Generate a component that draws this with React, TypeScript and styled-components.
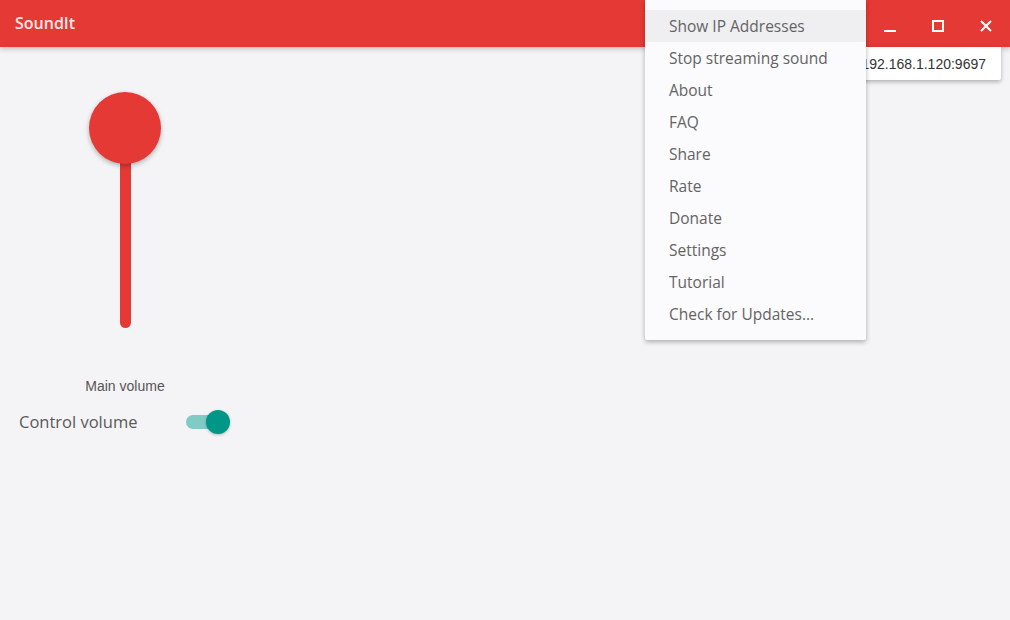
import React from "react";
import styled, { createGlobalStyle } from "styled-components";

const Global = createGlobalStyle`
  html, body { margin: 0; padding: 0; }
  body {
    background: #f4f3f6;
    font-family: "Open Sans", "Noto Sans", sans-serif;
    width: 1010px;
    height: 620px;
    overflow: hidden;
  }
`;

const Window = styled.div`
  position: relative;
  width: 1010px;
  height: 620px;
  background: #f4f3f6;
  display: flex;
  flex-direction: column;
`;

const TitleBar = styled.header`
  height: 47px;
  flex: none;
  background: #e53935;
  display: flex;
  align-items: center;
  box-shadow: 0 2px 5px rgba(0, 0, 0, 0.22);
  position: relative;
  z-index: 1;
`;

const Title = styled.div`
  padding-left: 15px;
  color: #fbe9e9;
  font-family: "Open Sans", sans-serif;
  font-weight: 600;
  font-size: 16px;
  flex: 1;
  margin-top: -1px;
`;

const Controls = styled.div`
  display: flex;
  height: 100%;
`;

const CtrlButton = styled.div`
  width: 48px;
  height: 100%;
  display: flex;
  align-items: center;
  justify-content: center;
  padding-top: 4px;
  box-sizing: border-box;
`;

const Content = styled.main`
  flex: 1;
  display: flex;
  flex-direction: column;
  padding-top: 45px;
`;

const SliderColumn = styled.div`
  width: 250px;
  display: flex;
  flex-direction: column;
  align-items: center;
`;

const Knob = styled.div`
  width: 72px;
  height: 72px;
  border-radius: 50%;
  background: #e53935;
  box-shadow: 0 2px 5px rgba(0, 0, 0, 0.28);
  position: relative;
  z-index: 1;
`;

const Track = styled.div`
  width: 11px;
  height: 170px;
  margin-top: -6px;
  background: #e53935;
  border-radius: 0 0 6px 6px;
`;

const SliderLabel = styled.div`
  margin-top: 50px;
  font-family: "Liberation Sans", Arial, sans-serif;
  font-size: 14px;
  line-height: 16px;
  color: #555;
`;

const ToggleRow = styled.div`
  margin-top: 16px;
  padding-left: 19px;
  display: flex;
  align-items: center;
  gap: 48px;
`;

const ToggleLabel = styled.div`
  font-family: "Open Sans", sans-serif;
  font-size: 16.5px;
  color: #5a5a5a;
  width: 119px;
  white-space: nowrap;
`;

const Switch = styled.div<{ $on: boolean }>`
  position: relative;
  width: 34px;
  height: 14px;
  border-radius: 7px;
  background: ${(p) => (p.$on ? "#80cbc4" : "#bdbdbd")};
`;

const Thumb = styled.div<{ $on: boolean }>`
  position: absolute;
  top: -5px;
  left: ${(p) => (p.$on ? "20px" : "-4px")};
  width: 24px;
  height: 24px;
  border-radius: 50%;
  background: ${(p) => (p.$on ? "#009688" : "#fafafa")};
  box-shadow: 0 1px 3px rgba(0, 0, 0, 0.25);
`;

const IpPopup = styled.div`
  position: absolute;
  top: 47px;
  left: 839px;
  width: 162px;
  height: 33px;
  box-sizing: border-box;
  background: #ffffff;
  box-shadow: 0 2px 4px rgba(0, 0, 0, 0.28);
  border-radius: 0 0 2px 2px;
  display: flex;
  align-items: center;
  justify-content: flex-end;
  padding-right: 15px;
  font-family: "Liberation Sans", Arial, sans-serif;
  font-size: 14px;
  color: #333;
  z-index: 2;
`;

const Menu = styled.ul`
  position: absolute;
  top: 0;
  left: 645px;
  width: 221px;
  margin: 0;
  padding: 10px 0;
  list-style: none;
  background: #fbfafc;
  box-shadow: 0 2px 5px rgba(0, 0, 0, 0.3);
  border-radius: 0 0 2px 2px;
  z-index: 3;
`;

const MenuItem = styled.li<{ $active?: boolean }>`
  height: 32px;
  display: flex;
  align-items: center;
  padding-left: 24px;
  font-family: "Open Sans", sans-serif;
  font-size: 15.5px;
  color: #646464;
  background: ${(p) => (p.$active ? "#efeef1" : "transparent")};
  white-space: nowrap;
`;

const items = [
  "Show IP Addresses",
  "Stop streaming sound",
  "About",
  "FAQ",
  "Share",
  "Rate",
  "Donate",
  "Settings",
  "Tutorial",
  "Check for Updates...",
];

export default function App() {
  return (
    <>
      <Global />
      <Window>
        <TitleBar>
          <Title>SoundIt</Title>
          <Controls>
            <CtrlButton>
              <svg width="14" height="14" viewBox="0 0 14 14">
                <line x1="1" y1="12" x2="13" y2="12" stroke="#fff" strokeWidth="2" />
              </svg>
            </CtrlButton>
            <CtrlButton>
              <svg width="14" height="14" viewBox="0 0 14 14">
                <rect x="2" y="2" width="10" height="10" fill="none" stroke="#fff" strokeWidth="2" />
              </svg>
            </CtrlButton>
            <CtrlButton>
              <svg width="14" height="14" viewBox="0 0 14 14">
                <path d="M2 2 L12 12 M12 2 L2 12" stroke="#fff" strokeWidth="2" />
              </svg>
            </CtrlButton>
          </Controls>
        </TitleBar>
        <Content>
          <SliderColumn>
            <Knob />
            <Track />
            <SliderLabel>Main volume</SliderLabel>
          </SliderColumn>
          <ToggleRow>
            <ToggleLabel>Control volume</ToggleLabel>
            <Switch $on>
              <Thumb $on />
            </Switch>
          </ToggleRow>
        </Content>
        <IpPopup>192.168.1.120:9697</IpPopup>
        <Menu>
          {items.map((t, i) => (
            <MenuItem key={t} $active={i === 0}>
              {t}
            </MenuItem>
          ))}
        </Menu>
      </Window>
    </>
  );
}
